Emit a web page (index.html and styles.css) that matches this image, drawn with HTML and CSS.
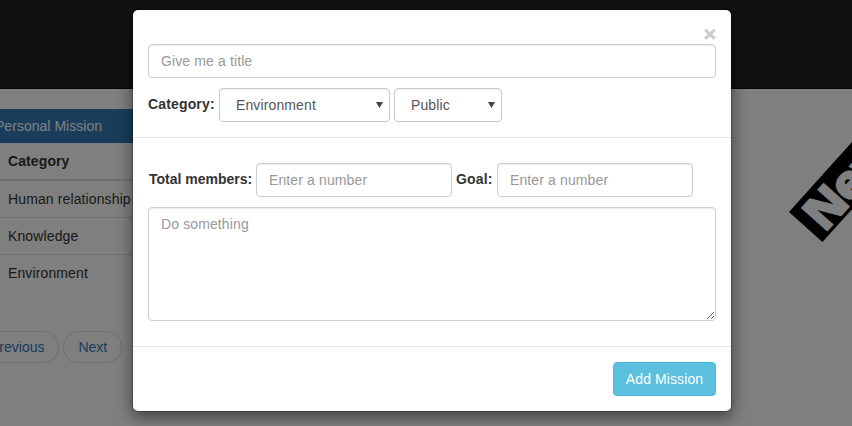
FILE: index.html
```html
<!DOCTYPE html>
<html lang="en">
<head>
<meta charset="utf-8">
<title>Missions</title>
<link rel="stylesheet" href="styles.css">
</head>
<body>
<div class="page">
  <header class="navbar"></header>
  <section class="missions">
    <div class="panel-heading">Personal Mission</div>
    <table class="table">
      <thead><tr><th>Category</th></tr></thead>
      <tbody>
        <tr><td>Human relationship</td></tr>
        <tr><td>Knowledge</td></tr>
        <tr><td>Environment</td></tr>
      </tbody>
    </table>
    <nav class="pager"><a>Previous</a><a>Next</a></nav>
  </section>
  <div class="stamp">New</div>
</div>
<div class="backdrop">
  <form class="modal">
    <div class="modal-header">
      <div class="close-row"><span class="close">×</span></div>
      <input class="control title" type="text" placeholder="Give me a title">
      <div class="row">
        <label class="label-category">Category:</label>
        <div class="control select category"><span>Environment</span><svg width="7" height="6" viewBox="0 0 7 6"><path d="M0 0h7L3.5 6z"/></svg></div>
        <div class="control select privacy"><span>Public</span><svg width="7" height="6" viewBox="0 0 7 6"><path d="M0 0h7L3.5 6z"/></svg></div>
      </div>
    </div>
    <div class="modal-body">
      <div class="row numbers">
        <label class="label-members">Total members:</label>
        <input class="control number" type="text" placeholder="Enter a number">
        <label class="label-goal">Goal:</label>
        <input class="control number" type="text" placeholder="Enter a number">
      </div>
      <textarea class="control" placeholder="Do something"></textarea>
    </div>
    <div class="modal-footer"><button class="btn" type="button">Add Mission</button></div>
  </form>
</div>
</body>
</html>
```
FILE: styles.css
```css
* { box-sizing: border-box; }
html, body { height: 100%; overflow: hidden; }
body {
  margin: 0;
  font: 14px/20px "Liberation Sans", Arial, sans-serif;
  color: #333;
  background: #fff;
}
.page { height: 426px; overflow: hidden; position: relative; }
.navbar { height: 89px; background: #222; border-bottom: 1px solid #080808; }
.missions { width: 300px; margin: 20px 0 0 -19px; }
.panel-heading { height: 34px; padding: 7px 14px; background: #337ab7; color: #fff; letter-spacing: .03px; }
.table { width: 100%; border-collapse: separate; border-spacing: 0; }
.table th, .table td { padding: 8px 8px 8px 27px; text-align: left; }
.table th { border-bottom: 2px solid #ddd; letter-spacing: .1px; }
.table td { border-top: 1px solid #ddd; letter-spacing: .12px; }
.table tbody tr:first-child td { border-top: 0; }
.pager { display: flex; gap: 4px; margin: 40px 0 0 -6px; }
.pager a {
  height: 32px;
  padding: 5px 14px;
  border: 1px solid #ddd;
  border-radius: 15px;
  color: #337ab7;
}
.stamp {
  position: absolute;
  left: 789px;
  top: 212px;
  width: 150px;
  height: 45px;
  padding-left: 8px;
  background: #000;
  color: #fff;
  font: 800 48px/45px "Open Sans", sans-serif;
  letter-spacing: -2px;
  -webkit-text-stroke: 1.2px #fff;
  transform: rotate(-48deg);
  transform-origin: 0 0;
}
.backdrop {
  position: absolute;
  inset: 0;
  display: flex;
  justify-content: center;
  align-items: flex-start;
  padding-top: 9px;
  padding-left: 12px;
  background: rgba(0, 0, 0, .5);
}
.modal {
  width: 600px;
  height: 403px;
  background: #fff;
  background-clip: padding-box;
  border: 1px solid rgba(0, 0, 0, .2);
  border-radius: 6px;
  box-shadow: 0 5px 15px rgba(0, 0, 0, .5);
}
.modal-header { padding: 15px; height: 128px; border-bottom: 1px solid #e5e5e5; }
.close-row { height: 19px; display: flex; justify-content: flex-end; }
.close { font-size: 21px; line-height: 17px; font-weight: bold; color: #ccc; -webkit-text-stroke: .6px #ccc; }
.control {
  display: block;
  height: 34px;
  margin: 0;
  padding: 6px 12px;
  border: 1px solid #ccc;
  border-radius: 4px;
  background: #fff;
  color: #555;
  font: inherit;
  letter-spacing: .12px;
  box-shadow: inset 0 1px 1px rgba(0, 0, 0, .075);
}
.control::placeholder { color: #999; opacity: 1; }
.title { width: 568px; }
.row { display: flex; align-items: center; gap: 4px; margin-top: 10px; height: 34px; }
label { flex: none; font-weight: bold; margin-bottom: 2px; white-space: nowrap; }
.label-category { width: 67px; letter-spacing: .15px; }
.label-members { width: 103px; }
.label-goal { width: 37px; letter-spacing: .15px; }
.select { display: flex; justify-content: space-between; align-items: center; padding: 6px 6px 6px 16px; }
.select svg { fill: #444; margin-bottom: 1px; }
.category { width: 171px; }
.privacy { width: 108px; }
.modal-body { padding: 25px 15px 0; height: 208px; }
.numbers { margin-top: 0; padding-left: 1px; }
.number { width: 196px; }
textarea.control { width: 568px; height: 114px; margin-top: 10px; resize: vertical; }
.modal-footer { display: flex; justify-content: flex-end; padding: 15px; border-top: 1px solid #e5e5e5; }
.btn {
  width: 103px;
  height: 34px;
  padding: 6px 0;
  border: 1px solid #46b8da;
  border-radius: 4px;
  background: #5bc0de;
  color: #fff;
  font: inherit;
  letter-spacing: .1px;
}
```
